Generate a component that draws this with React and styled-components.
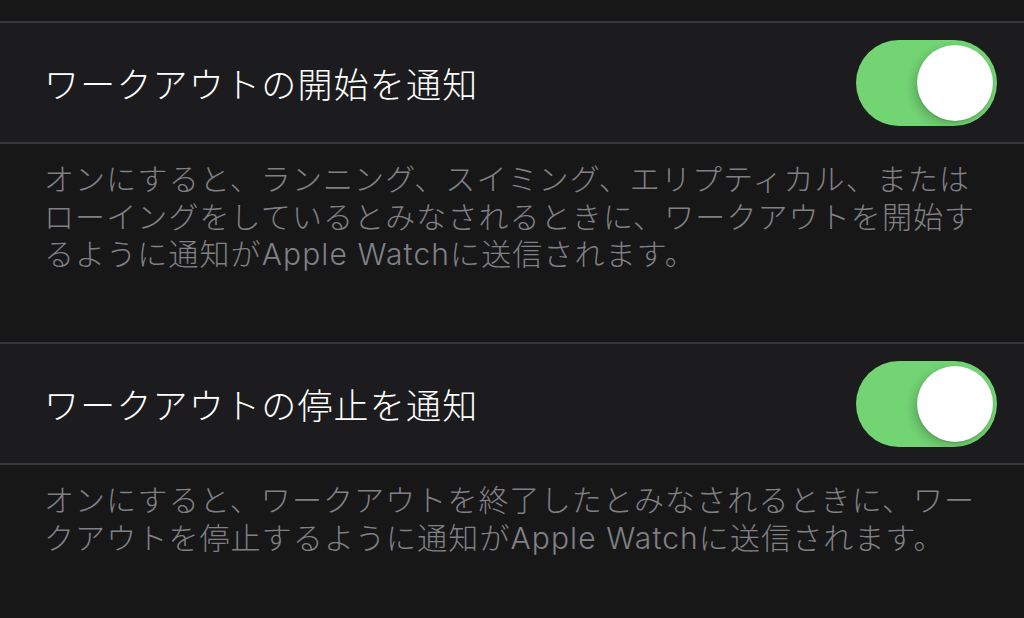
import React from "react";
import styled, { createGlobalStyle } from "styled-components";

const GlobalStyle = createGlobalStyle`
  html, body {
    margin: 0;
    padding: 0;
    background: #171717;
  }
  body {
    font-family: "Inter", "Noto Sans CJK JP", sans-serif;
  }
`;

const Page = styled.div`
  width: 1024px;
  height: 618px;
  overflow: hidden;
  background: #171717;
  padding-top: 21px;
  box-sizing: border-box;
`;

const Row = styled.div`
  display: flex;
  align-items: center;
  justify-content: space-between;
  height: 123px;
  padding: 0 27px 0 44px;
  background: #1c1c1e;
  border-top: 2px solid #38383a;
  border-bottom: 2px solid #38383a;
  box-sizing: border-box;
`;

const Title = styled.span`
  color: #ffffff;
  font-size: 35px;
  letter-spacing: 1.2px;
  font-weight: 300;
`;

const Switch = styled.div`
  position: relative;
  width: 141px;
  height: 86px;
  border-radius: 43px;
  background: ${(p) => (p.on ? "#72d473" : "#39393d")};
  flex-shrink: 0;
`;

const Knob = styled.div`
  position: absolute;
  top: 5px;
  left: ${(p) => (p.on ? "61px" : "5px")};
  width: 76px;
  height: 76px;
  border-radius: 50%;
  background: #ffffff;
  box-shadow: -4px 4px 10px rgba(0, 0, 0, 0.18), 0 1px 2px rgba(0, 0, 0, 0.15);
`;

const Footer = styled.div`
  color: #808085;
  font-size: 30px;
  font-weight: 300;
  letter-spacing: 1.1px;
  line-height: 37.5px;
  padding: 17px 20px 0 44px;
  height: ${(p) => p.h || "auto"};
  box-sizing: border-box;
`;

const Toggle = ({ on }) => (
  <Switch on={on}>
    <Knob on={on} />
  </Switch>
);

export default function App() {
  return (
    <>
      <GlobalStyle />
      <Page>
        <Row>
          <Title>ワークアウトの開始を通知</Title>
          <Toggle on />
        </Row>
        <Footer h="198px">
          オンにすると、ランニング、スイミング、エリプティカル、または
          <br />
          ローイングをしているとみなされるときに、ワークアウトを開始す
          <br />
          るように通知がApple Watchに送信されます。
        </Footer>
        <Row>
          <Title>ワークアウトの停止を通知</Title>
          <Toggle on />
        </Row>
        <Footer>
          オンにすると、ワークアウトを終了したとみなされるときに、ワー
          <br />
          クアウトを停止するように通知がApple Watchに送信されます。
        </Footer>
      </Page>
    </>
  );
}
